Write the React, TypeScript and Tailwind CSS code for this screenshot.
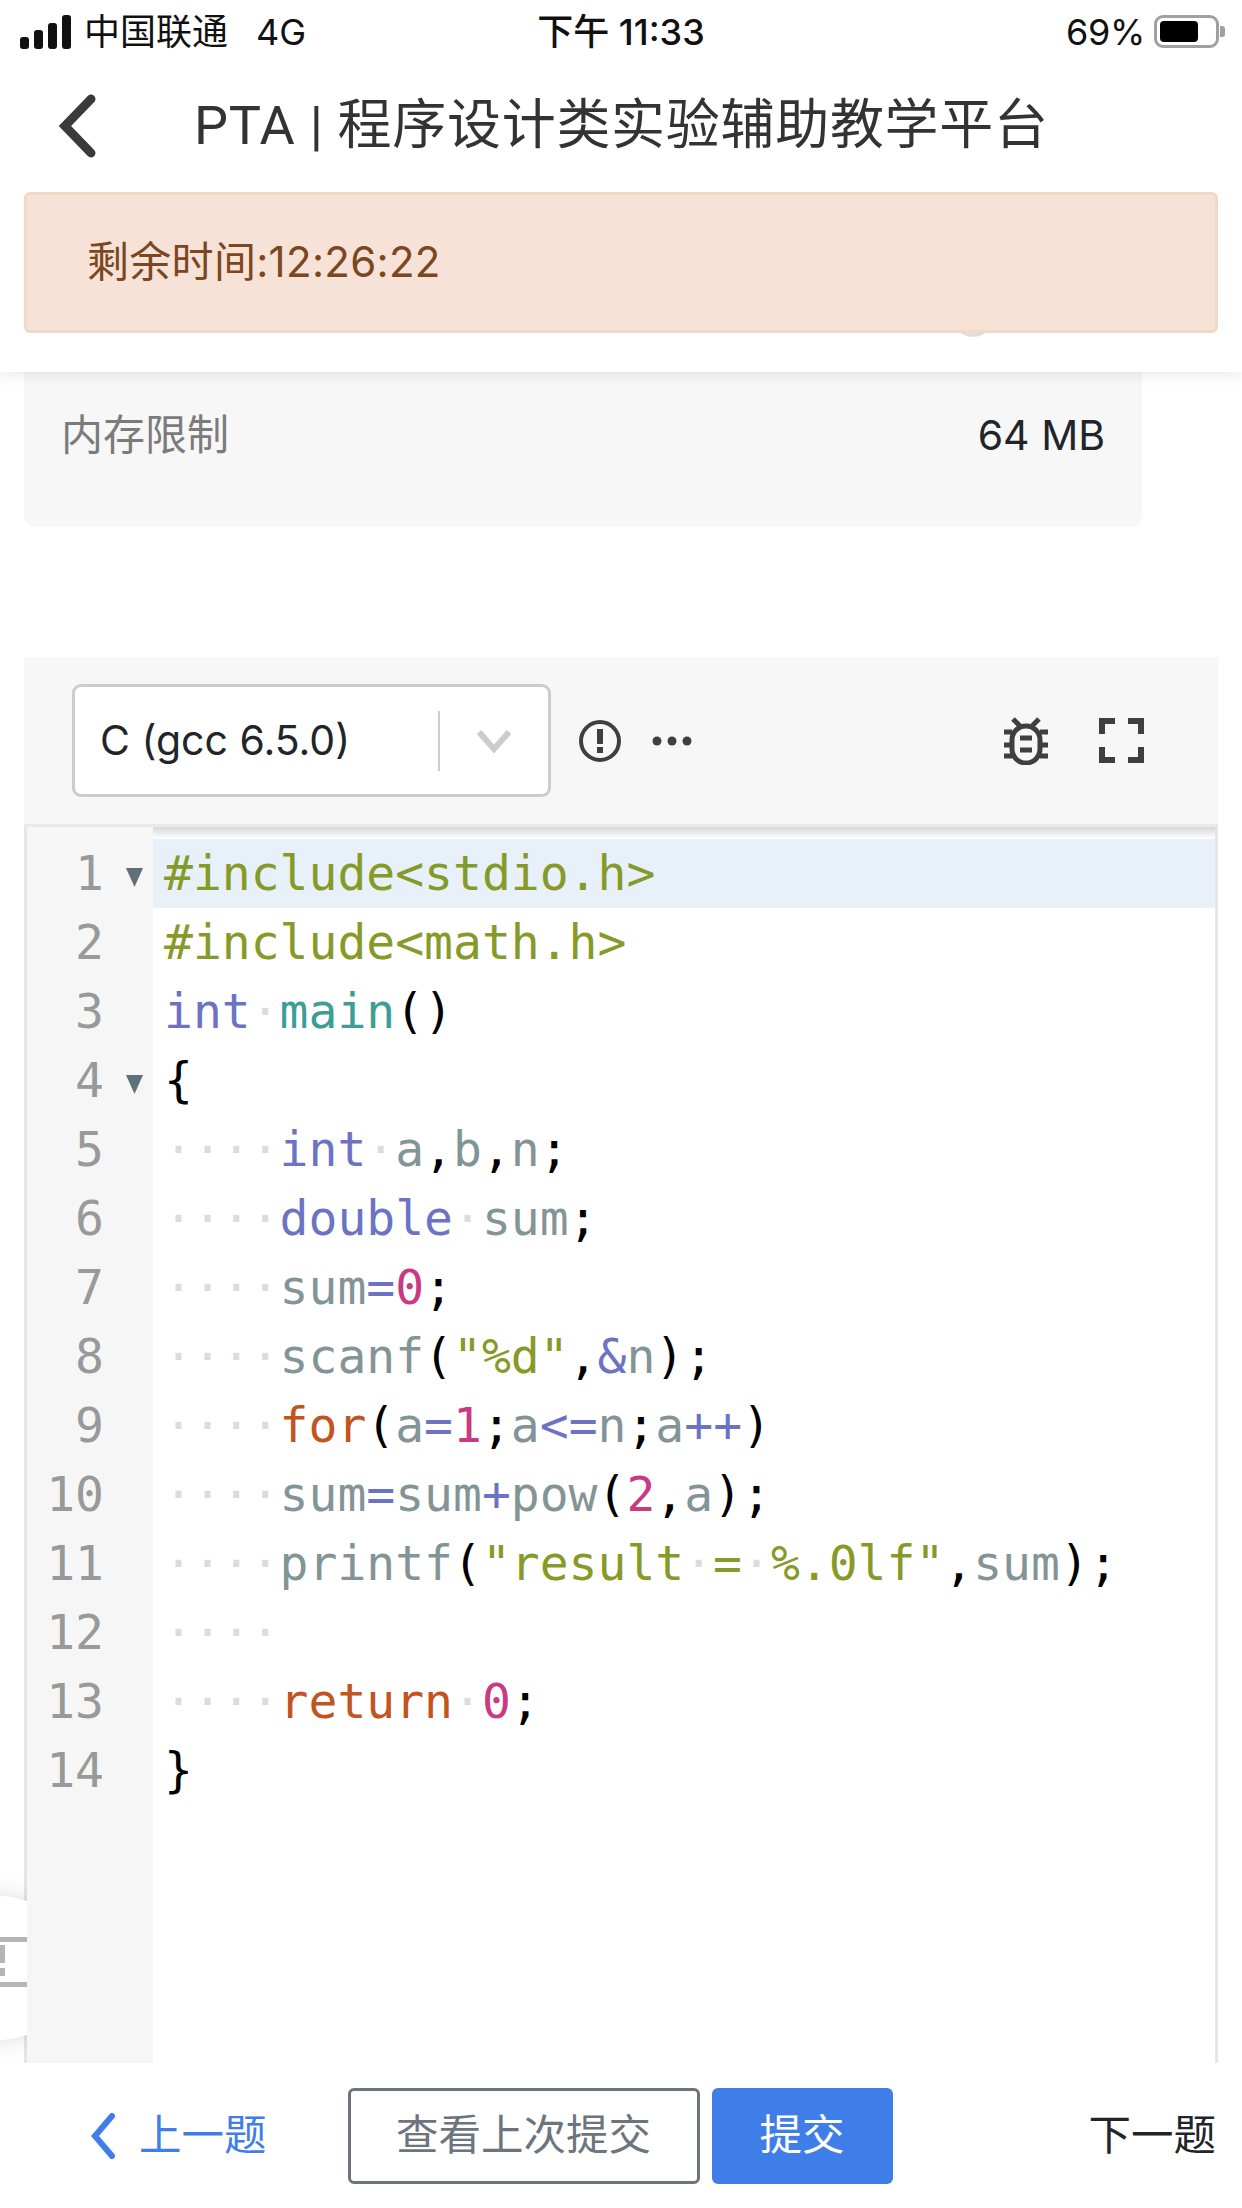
import React from "react";

type Kind = "k" | "f" | "s" | "n" | "v" | "r" | "p" | "d";
const colors: Record<Kind, string> = {
  k: "text-[#6c73c2]",
  f: "text-[#3c9e94]",
  s: "text-[#869a28]",
  n: "text-[#c83a82]",
  v: "text-[#839496]",
  r: "text-[#c2541f]",
  p: "text-black",
  d: "text-[#dcdcdc]",
};
const IND: [Kind, string] = ["d", "····"];
const lines: [Kind, string][][] = [
  [["s", "#include<stdio.h>"]],
  [["s", "#include<math.h>"]],
  [["k", "int"], ["d", "·"], ["f", "main"], ["p", "()"]],
  [["p", "{"]],
  [IND, ["k", "int"], ["d", "·"], ["v", "a"], ["p", ","], ["v", "b"], ["p", ","], ["v", "n"], ["p", ";"]],
  [IND, ["k", "double"], ["d", "·"], ["v", "sum"], ["p", ";"]],
  [IND, ["v", "sum"], ["k", "="], ["n", "0"], ["p", ";"]],
  [IND, ["v", "scanf"], ["p", "("], ["s", "\"%d\""], ["p", ","], ["k", "&"], ["v", "n"], ["p", ");"]],
  [IND, ["r", "for"], ["p", "("], ["v", "a"], ["k", "="], ["n", "1"], ["p", ";"], ["v", "a"], ["k", "<="], ["v", "n"], ["p", ";"], ["v", "a"], ["k", "++"], ["p", ")"]],
  [IND, ["v", "sum"], ["k", "="], ["v", "sum"], ["k", "+"], ["v", "pow"], ["p", "("], ["n", "2"], ["p", ","], ["v", "a"], ["p", ");"]],
  [IND, ["v", "printf"], ["p", "("], ["s", "\"result"], ["d", "·"], ["s", "="], ["d", "·"], ["s", "%.0lf\""], ["p", ","], ["v", "sum"], ["p", ");"]],
  [IND],
  [IND, ["r", "return"], ["d", "·"], ["n", "0"], ["p", ";"]],
  [["p", "}"]],
];

const sans = "font-['Inter','Noto_Sans_CJK_SC',sans-serif]";

export default function App() {
  return (
    <div className={`relative w-[1242px] h-[2208px] overflow-hidden bg-white flex flex-col ${sans}`}>
      {/* fixed header */}
      <div className="relative z-10 h-[372px] shrink-0 bg-white shadow-[0_4px_12px_rgba(0,0,0,0.08)] flex flex-col">
        <div className="h-[60px] grid grid-cols-3 items-center text-[36px] leading-none text-[#111] pt-[3px]">
          <div className="flex items-center pl-[20px]">
            <svg width="52" height="34" viewBox="0 0 52 34" fill="#111">
              <rect x="0" y="22" width="9" height="12" rx="3" />
              <rect x="14" y="15" width="9" height="19" rx="3" />
              <rect x="28" y="8" width="9" height="26" rx="3" />
              <rect x="42" y="0" width="9" height="34" rx="3" />
            </svg>
            <span className="ml-[12px]">中国联通</span>
            <span className="ml-[28px]">4G</span>
          </div>
          <div className="text-center font-medium">下午 11:33</div>
          <div className="flex items-center justify-end pr-[17px]">
            <span className="tracking-[-0.3px]">69%</span>
            <div className="ml-[9px] w-[65px] h-[33px] rounded-[9px] border-[3px] border-[#a0a0a0] p-[3px]">
              <div className="h-full w-[38px] rounded-[4px] bg-black" />
            </div>
            <div className="ml-[1px] w-[5px] h-[11px] rounded-r-[3px] bg-[#a0a0a0]" />
          </div>
        </div>
        <div className="h-[132px] flex items-center pl-[58px]">
          <svg width="40" height="64" viewBox="0 0 40 64" fill="none" stroke="#3a3a3a" strokeWidth="9" strokeLinecap="round" strokeLinejoin="miter">
            <path d="M33 5 L7 32 L33 59" />
          </svg>
          <span className="ml-[96px] font-['Roboto','Noto_Sans_CJK_SC',sans-serif] text-[54px] leading-none text-[#333] tracking-[0.7px]">PTA | 程序设计类实验辅助教学平台</span>
        </div>
        <div className="relative mx-[24px] h-[141px] rounded-[6px] border-[3px] border-[#f3d8c3] bg-[#f6e2d6] flex items-center pl-[60px] pb-[2px] text-[#7b4620] text-[42px] leading-none tracking-[0.3px]">
          剩余时间:12:26:22
          <div className="absolute left-[924px] top-[98px] -z-10 w-[44px] h-[44px] rounded-full bg-[#dedede]" />
        </div>
      </div>

      {/* limits panel */}
      <div className="ml-[24px] w-[1118px] h-[155px] shrink-0 bg-[#f7f7f7] rounded-b-[12px] flex justify-between pl-[37px] pr-[37px] pt-[33px] text-[42px] leading-[60px]">
        <span className="text-[#7b7b7b]">内存限制</span>
        <span className="text-[#212529] text-[41px]">64 MB</span>
      </div>

      {/* toolbar */}
      <div className="mt-[130px] mx-[24px] h-[170px] shrink-0 bg-[#f7f7f7] flex items-center pl-[48px] pr-[74px] border-b-[3px] border-[#e9e9e9]">
        <div className="w-[479px] h-[113px] rounded-[9px] border-[3px] border-[#cccccc] bg-white flex items-center pl-[25px]">
          <span className="text-[41px] leading-none text-[#212529] w-[338px]">C (gcc 6.5.0)</span>
          <div className="w-[2px] h-[60px] bg-[#cccccc]" />
          <svg className="ml-[36px]" width="36" height="24" viewBox="0 0 36 24" fill="none" stroke="#cccccc" strokeWidth="6">
            <path d="M3 3 L18 20 L33 3" />
          </svg>
        </div>
        <svg className="ml-[28px]" width="42" height="42" viewBox="0 0 42 42" fill="none">
          <circle cx="21" cy="21" r="19" stroke="#3f3f3f" strokeWidth="4" />
          <rect x="18" y="9" width="6" height="15" fill="#3f3f3f" />
          <rect x="18" y="27" width="6" height="6" fill="#3f3f3f" />
        </svg>
        <svg className="ml-[31px]" width="40" height="10" viewBox="0 0 40 10" fill="#3f3f3f">
          <circle cx="5" cy="5" r="4.5" />
          <circle cx="20" cy="5" r="4.5" />
          <circle cx="35" cy="5" r="4.5" />
        </svg>
        <svg className="ml-auto" width="44" height="48" viewBox="0 0 44 48" fill="none" stroke="#3f3f3f" strokeWidth="5">
          <path d="M9 2 L16 9 M35 2 L28 9" />
          <rect x="8" y="9" width="28" height="37" rx="14" />
          <path d="M0 15 H8 M36 15 H44 M0 28 H8 M36 28 H44 M0 39 H8 M36 39 H44" />
          <path d="M16 21 H28 M16 33 H28" strokeWidth="5" />
        </svg>
        <svg className="ml-[51px]" width="45" height="45" viewBox="0 0 45 45" fill="none" stroke="#3f3f3f" strokeWidth="6">
          <path d="M3 16 V3 H16 M29 3 H42 V16 M3 29 V42 H16 M42 29 V42 H29" />
        </svg>
      </div>

      {/* editor */}
      <div className="relative mx-[24px] flex-1 min-h-0 flex border-x-[3px] border-[#e6e6e6] overflow-hidden">
        <div className="w-[126px] shrink-0 bg-[#f6f6f6] pt-[12px] font-['DejaVu_Sans_Mono',monospace] text-[48px] leading-[69px] text-[#999999]">
          {lines.map((_, i) => (
            <div key={i} className="h-[69px] relative text-right pr-[49px]">
              {i + 1}
              {(i === 0 || i === 3) && (
                <svg className="absolute left-[99px] top-[29px]" width="17" height="19" viewBox="0 0 17 19" fill="#5f7178">
                  <path d="M0 0 H17 L8.5 19 Z" />
                </svg>
              )}
            </div>
          ))}
        </div>
        <div className="relative flex-1 pt-[12px] font-['DejaVu_Sans_Mono',monospace] text-[48px] leading-[69px] whitespace-pre">
          <div className="absolute inset-x-0 top-0 h-[12px] bg-gradient-to-b from-[#d8d8d8] to-white" />
          {lines.map((l, i) => (
            <div key={i} className={`h-[69px] pl-[11px] ${i === 0 ? "bg-[#e8f0fa]" : ""}`}>
              {l.map(([k, t], j) => (
                <span key={j} className={colors[k]}>
                  {t}
                </span>
              ))}
            </div>
          ))}
        </div>
      </div>

      {/* floating side button, clipped at the gutter */}
      <div className="absolute left-0 top-[1870px] z-10 w-[27px] h-[196px] overflow-hidden">
        <div className="absolute left-[-72px] top-[26px] w-[144px] h-[144px] rounded-full bg-white shadow-[0_0_24px_rgba(0,0,0,0.14)]" />
        <svg className="absolute left-0 top-[67px]" width="27" height="50" viewBox="0 0 27 50" fill="#b5b5b5">
          <rect x="0" y="0" width="27" height="5" />
          <rect x="0" y="8" width="5" height="18" />
          <rect x="0" y="31" width="5" height="8" />
          <rect x="0" y="45" width="27" height="5" />
        </svg>
      </div>

      {/* bottom bar */}
      <div className="relative z-20 h-[145px] shrink-0 bg-white flex items-center pl-[90px] pr-[26px] text-[42.5px] leading-none">
        <svg width="26" height="46" viewBox="0 0 26 46" fill="none" stroke="#3f7ee8" strokeWidth="6" strokeLinecap="round">
          <path d="M22 3 L5 23 L22 43" />
        </svg>
        <span className="ml-[23px] text-[#3f7ee8]">上一题</span>
        <button className="ml-[81px] w-[352px] h-[96px] rounded-[6px] border-[3px] border-[#6c757d] text-[#6c757d]">查看上次提交</button>
        <button className="ml-[12px] w-[181px] h-[96px] rounded-[6px] bg-[#3f7ee8] text-white">提交</button>
        <span className="ml-auto text-[#212529]">下一题</span>
      </div>
    </div>
  );
}
